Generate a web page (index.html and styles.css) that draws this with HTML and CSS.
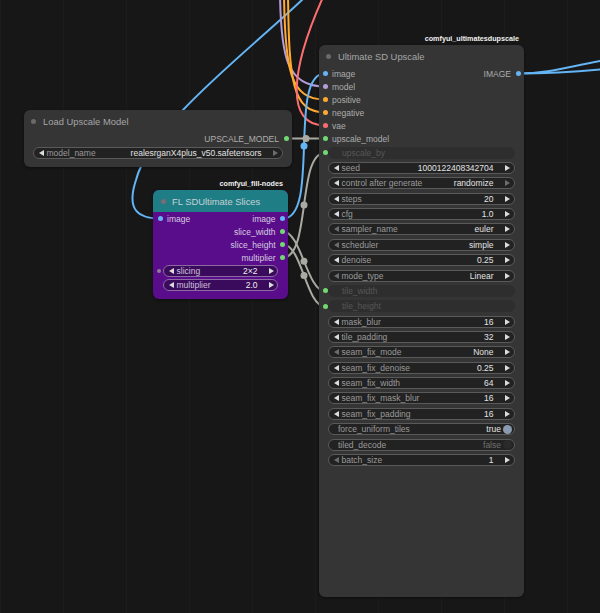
FILE: index.html
```html
<!DOCTYPE html>
<html lang="en">

<head>
    <meta charset="UTF-8">
    <meta name="viewport" content="width=device-width, initial-scale=1.0">
    <title>Ultimate SD Upscale graph</title>
    <link rel="stylesheet" href="styles.css">
</head>

<body>
    <div class="canvas">

        <!-- Links (drawn under the nodes) -->
        <svg class="links" width="600" height="613" viewBox="0 0 600 613">
            <g fill="none" stroke-width="2">
                <path stroke="#64b5f6" d="M304 -2 C250 50 150 125 136 180 C126 210 138 218.5 160 218.5" />
                <path stroke="#b39ddb" d="M280 -5 C281 55 286 86.5 325 86.5" />
                <path stroke="#ffa931" d="M284 -5 C285 70 290 99.5 325 99.5" />
                <path stroke="#ffa931" d="M288 -5 C289 80 292 112.5 325 112.5" />
                <path stroke="#ff6e6e" d="M324 -5 C290 70 285 125.5 325 125.5" />
                <path stroke="#64b5f6" d="M283 218.5 C320.5 218.5 287.5 73.5 325 73.5" />
                <path class="grey" d="M287 138.5 C296.5 138.5 315.5 138.5 325 138.5" />
                <path class="grey" d="M283 257.5 C311 257.5 297 152.7 325 152.7" />
                <path class="grey" d="M283 231.5 C301 231.5 307 291 325 291" />
                <path class="grey" d="M283 244.5 C302 244.5 306 306.4 325 306.4" />
                <path stroke="#64b5f6" d="M518 73.5 C550 73.5 570 66 605 60" />
                <path stroke="#64b5f6" d="M518 73.5 C550 73.5 575 72 605 69" />
            </g>
            <circle cx="304" cy="146" r="3.5" fill="#64b5f6" />
            <circle class="grey-dot" cx="306" cy="138.5" r="3.5" />
            <circle class="grey-dot" cx="304" cy="205" r="3.5" />
            <circle class="grey-dot" cx="304" cy="261.2" r="3.5" />
            <circle class="grey-dot" cx="304" cy="275.4" r="3.5" />
        </svg>

        <!-- Load Upscale Model -->
        <div class="node load-node">
            <div class="node-title"><span class="title-dot"></span>Load Upscale Model</div>
            <div class="slots">
                <div class="slot-col inputs"></div>
                <div class="slot-col outputs">
                    <div class="slot">UPSCALE_MODEL<span class="dot green"></span></div>
                </div>
            </div>
            <div class="widget-row">
                <div class="widget">
                    <span class="arr-l"></span><span class="lbl">model_name</span>
                    <span class="val">realesrganX4plus_v50.safetensors</span><span class="arr-r off"></span>
                </div>
            </div>
        </div>

        <!-- FL SDUltimate Slices -->
        <div class="node fl-node">
            <div class="badge">comfyui_fill-nodes</div>
            <div class="node-title"><span class="title-dot"></span>FL SDUltimate Slices</div>
            <div class="slots">
                <div class="slot-col inputs">
                    <div class="slot"><span class="dot blue"></span>image</div>
                </div>
                <div class="slot-col outputs">
                    <div class="slot">image<span class="dot blue"></span></div>
                    <div class="slot">slice_width<span class="dot green"></span></div>
                    <div class="slot">slice_height<span class="dot green"></span></div>
                    <div class="slot">multiplier<span class="dot green"></span></div>
                </div>
            </div>
            <div class="widget-row socket">
                <span class="dot grey"></span>
                <div class="widget">
                    <span class="arr-l"></span><span class="lbl">slicing</span>
                    <span class="val">2×2</span><span class="arr-r"></span>
                </div>
            </div>
            <div class="widget-row">
                <div class="widget">
                    <span class="arr-l"></span><span class="lbl">multiplier</span>
                    <span class="val">2.0</span><span class="arr-r"></span>
                </div>
            </div>
        </div>

        <!-- Ultimate SD Upscale -->
        <div class="node usdu-node">
            <div class="badge">comfyui_ultimatesdupscale</div>
            <div class="node-title"><span class="title-dot"></span>Ultimate SD Upscale</div>
            <div class="slots">
                <div class="slot-col inputs">
                    <div class="slot"><span class="dot blue"></span>image</div>
                    <div class="slot"><span class="dot lilac"></span>model</div>
                    <div class="slot"><span class="dot orange"></span>positive</div>
                    <div class="slot"><span class="dot orange"></span>negative</div>
                    <div class="slot"><span class="dot red"></span>vae</div>
                    <div class="slot"><span class="dot green"></span>upscale_model</div>
                </div>
                <div class="slot-col outputs">
                    <div class="slot">IMAGE<span class="dot blue"></span></div>
                </div>
            </div>

            <div class="widget-row socket">
                <span class="dot green"></span>
                <div class="widget linked"><span class="lbl">upscale_by</span></div>
            </div>
            <div class="widget-row">
                <div class="widget"><span class="arr-l"></span><span class="lbl">seed</span><span class="val">1000122408342704</span><span class="arr-r"></span></div>
            </div>
            <div class="widget-row">
                <div class="widget"><span class="arr-l"></span><span class="lbl">control after generate</span><span class="val">randomize</span><span class="arr-r off"></span></div>
            </div>
            <div class="widget-row">
                <div class="widget"><span class="arr-l"></span><span class="lbl">steps</span><span class="val">20</span><span class="arr-r"></span></div>
            </div>
            <div class="widget-row">
                <div class="widget"><span class="arr-l"></span><span class="lbl">cfg</span><span class="val">1.0</span><span class="arr-r"></span></div>
            </div>
            <div class="widget-row">
                <div class="widget"><span class="arr-l off"></span><span class="lbl">sampler_name</span><span class="val">euler</span><span class="arr-r"></span></div>
            </div>
            <div class="widget-row">
                <div class="widget"><span class="arr-l off"></span><span class="lbl">scheduler</span><span class="val">simple</span><span class="arr-r"></span></div>
            </div>
            <div class="widget-row">
                <div class="widget"><span class="arr-l"></span><span class="lbl">denoise</span><span class="val">0.25</span><span class="arr-r"></span></div>
            </div>
            <div class="widget-row">
                <div class="widget"><span class="arr-l off"></span><span class="lbl">mode_type</span><span class="val">Linear</span><span class="arr-r"></span></div>
            </div>
            <div class="widget-row socket">
                <span class="dot green"></span>
                <div class="widget linked"><span class="lbl">tile_width</span></div>
            </div>
            <div class="widget-row socket">
                <span class="dot green"></span>
                <div class="widget linked"><span class="lbl">tile_height</span></div>
            </div>
            <div class="widget-row">
                <div class="widget"><span class="arr-l"></span><span class="lbl">mask_blur</span><span class="val">16</span><span class="arr-r"></span></div>
            </div>
            <div class="widget-row">
                <div class="widget"><span class="arr-l"></span><span class="lbl">tile_padding</span><span class="val">32</span><span class="arr-r"></span></div>
            </div>
            <div class="widget-row">
                <div class="widget"><span class="arr-l off"></span><span class="lbl">seam_fix_mode</span><span class="val">None</span><span class="arr-r"></span></div>
            </div>
            <div class="widget-row">
                <div class="widget"><span class="arr-l"></span><span class="lbl">seam_fix_denoise</span><span class="val">0.25</span><span class="arr-r"></span></div>
            </div>
            <div class="widget-row">
                <div class="widget"><span class="arr-l"></span><span class="lbl">seam_fix_width</span><span class="val">64</span><span class="arr-r"></span></div>
            </div>
            <div class="widget-row">
                <div class="widget"><span class="arr-l"></span><span class="lbl">seam_fix_mask_blur</span><span class="val">16</span><span class="arr-r"></span></div>
            </div>
            <div class="widget-row">
                <div class="widget"><span class="arr-l"></span><span class="lbl">seam_fix_padding</span><span class="val">16</span><span class="arr-r"></span></div>
            </div>
            <div class="widget-row">
                <div class="widget toggle"><span class="lbl">force_uniform_tiles</span><span class="val">true</span><span class="knob on"></span></div>
            </div>
            <div class="widget-row">
                <div class="widget toggle"><span class="lbl">tiled_decode</span><span class="val dim">false</span><span class="knob"></span></div>
            </div>
            <div class="widget-row">
                <div class="widget"><span class="arr-l off"></span><span class="lbl">batch_size</span><span class="val">1</span><span class="arr-r"></span></div>
            </div>
        </div>

    </div>
</body>

</html>
```

FILE: styles.css
```css
/* General */
* {
    margin: 0;
    padding: 0;
    box-sizing: border-box;
}

body {
    background: #171717;
    font-family: "Liberation Sans", Arial, sans-serif;
}

/* Graph canvas */
.canvas {
    position: relative;
    width: 600px;
    height: 613px;
    overflow: hidden;
    background-color: #171717;
    background-image: linear-gradient(90deg, rgba(255, 255, 255, 0.018) 1px, transparent 1px);
    background-size: 63px 63px;
}

.links {
    position: absolute;
    left: 0;
    top: 0;
}

.links .grey {
    stroke: #aaaaa2;
}

.links .grey-dot {
    fill: #aaaaa2;
}

/* Nodes */
.node {
    position: absolute;
    background: #353535;
    border-radius: 6px;
    box-shadow: 0 1px 3px rgba(0, 0, 0, 0.45);
}

.load-node {
    left: 24px;
    top: 110px;
    width: 268px;
    height: 57px;
}

.fl-node {
    left: 153px;
    top: 190px;
    width: 135px;
    height: 109px;
    background: #590d8a;
}

.usdu-node {
    left: 319px;
    top: 45px;
    width: 205px;
    height: 552px;
}

.badge {
    position: absolute;
    right: 5px;
    bottom: calc(100% + 2px);
    font-size: 7.2px;
    font-weight: bold;
    color: #f0f0f0;
    white-space: nowrap;
}

.node-title {
    height: 22px;
    display: flex;
    align-items: center;
    gap: 7.5px;
    padding-left: 6.5px;
    font-size: 9.4px;
    color: #a6a6a6;
    white-space: nowrap;
}

.title-dot {
    width: 5px;
    height: 5px;
    border-radius: 50%;
    background: #6a6a6a;
}

.fl-node .node-title {
    background: #1f7d86;
    border-radius: 6px 6px 0 0;
    padding-left: 7.5px;
    gap: 6.5px;
    color: #c4d2d4;
}

.fl-node .title-dot {
    background: #7d6b74;
}

/* Slots */
.slots {
    display: flex;
    justify-content: space-between;
}

.slot-col {
    display: flex;
    flex-direction: column;
}

.slot {
    height: 13px;
    display: flex;
    align-items: center;
    gap: 4.5px;
    font-size: 8.5px;
    color: #adadad;
    white-space: nowrap;
}

.inputs .slot {
    padding-left: 3.5px;
}

.outputs .slot {
    justify-content: flex-end;
    padding-right: 3.5px;
}

.fl-node .slot {
    color: #d6cbe0;
}

.fl-node .inputs .slot {
    padding-left: 4.5px;
}

.fl-node .outputs .slot {
    padding-right: 3px;
}

.dot {
    width: 5px;
    height: 5px;
    border-radius: 50%;
    flex: none;
}

.dot.blue { background: #64b5f6; }
.dot.lilac { background: #b39ddb; }
.dot.orange { background: #ffa931; }
.dot.red { background: #ff6e6e; }
.dot.green { background: #72d872; }
.dot.grey { background: #8c7c98; width: 4px; height: 4px; }

/* Widgets */
.widget-row {
    height: 15.37px;
    display: flex;
    align-items: center;
    padding: 0 9px;
}

.widget-row.socket {
    padding-left: 3.5px;
    gap: 0.5px;
}

.widget {
    flex: 1;
    height: 12px;
    display: flex;
    align-items: center;
    padding: 0 4.5px;
    border: 1px solid #5a5a5a;
    border-radius: 6px;
    background: #222;
    font-size: 8.5px;
    white-space: nowrap;
}

.widget.linked {
    border-color: transparent;
    background: #2e2e2e;
    padding-left: 13px;
}

.widget.linked .lbl {
    color: #575757;
    margin-left: 0;
}

.widget.toggle {
    padding-left: 9px;
    padding-right: 2px;
}

.widget.toggle .lbl {
    margin-left: 0;
}

.lbl {
    flex: 1;
    margin-left: 3px;
    color: #9b9b9b;
}

.val {
    margin-right: 11px;
    color: #e2e2e2;
}

.val.dim {
    color: #707070;
}

.toggle .val {
    margin-right: 2px;
}

.arr-l,
.arr-r {
    width: 0;
    height: 0;
    flex: none;
    border-top: 3px solid transparent;
    border-bottom: 3px solid transparent;
}

.arr-l {
    border-right: 5px solid #dcdcdc;
}

.arr-r {
    border-left: 5px solid #dcdcdc;
}

.arr-l.off {
    border-right-color: #6c6c6c;
}

.arr-r.off {
    border-left-color: #6c6c6c;
}

.knob {
    width: 9px;
    height: 9px;
    border-radius: 50%;
    background: #2a2a2a;
}

.knob.on {
    background: #8a9bb0;
}

/* FL node widgets */
.fl-node .widget-row {
    height: 14px;
    padding: 0 10px;
}

.fl-node .widget-row.socket {
    padding-left: 4px;
    gap: 2px;
}

.fl-node .widget {
    height: 12.5px;
    background: #3a0a5c;
    border-color: #8a6aa0;
    padding: 0 3.5px 0 4.5px;
}

.fl-node .lbl {
    color: #cfc0dc;
}

.fl-node .val {
    color: #f0f0f0;
}
```
